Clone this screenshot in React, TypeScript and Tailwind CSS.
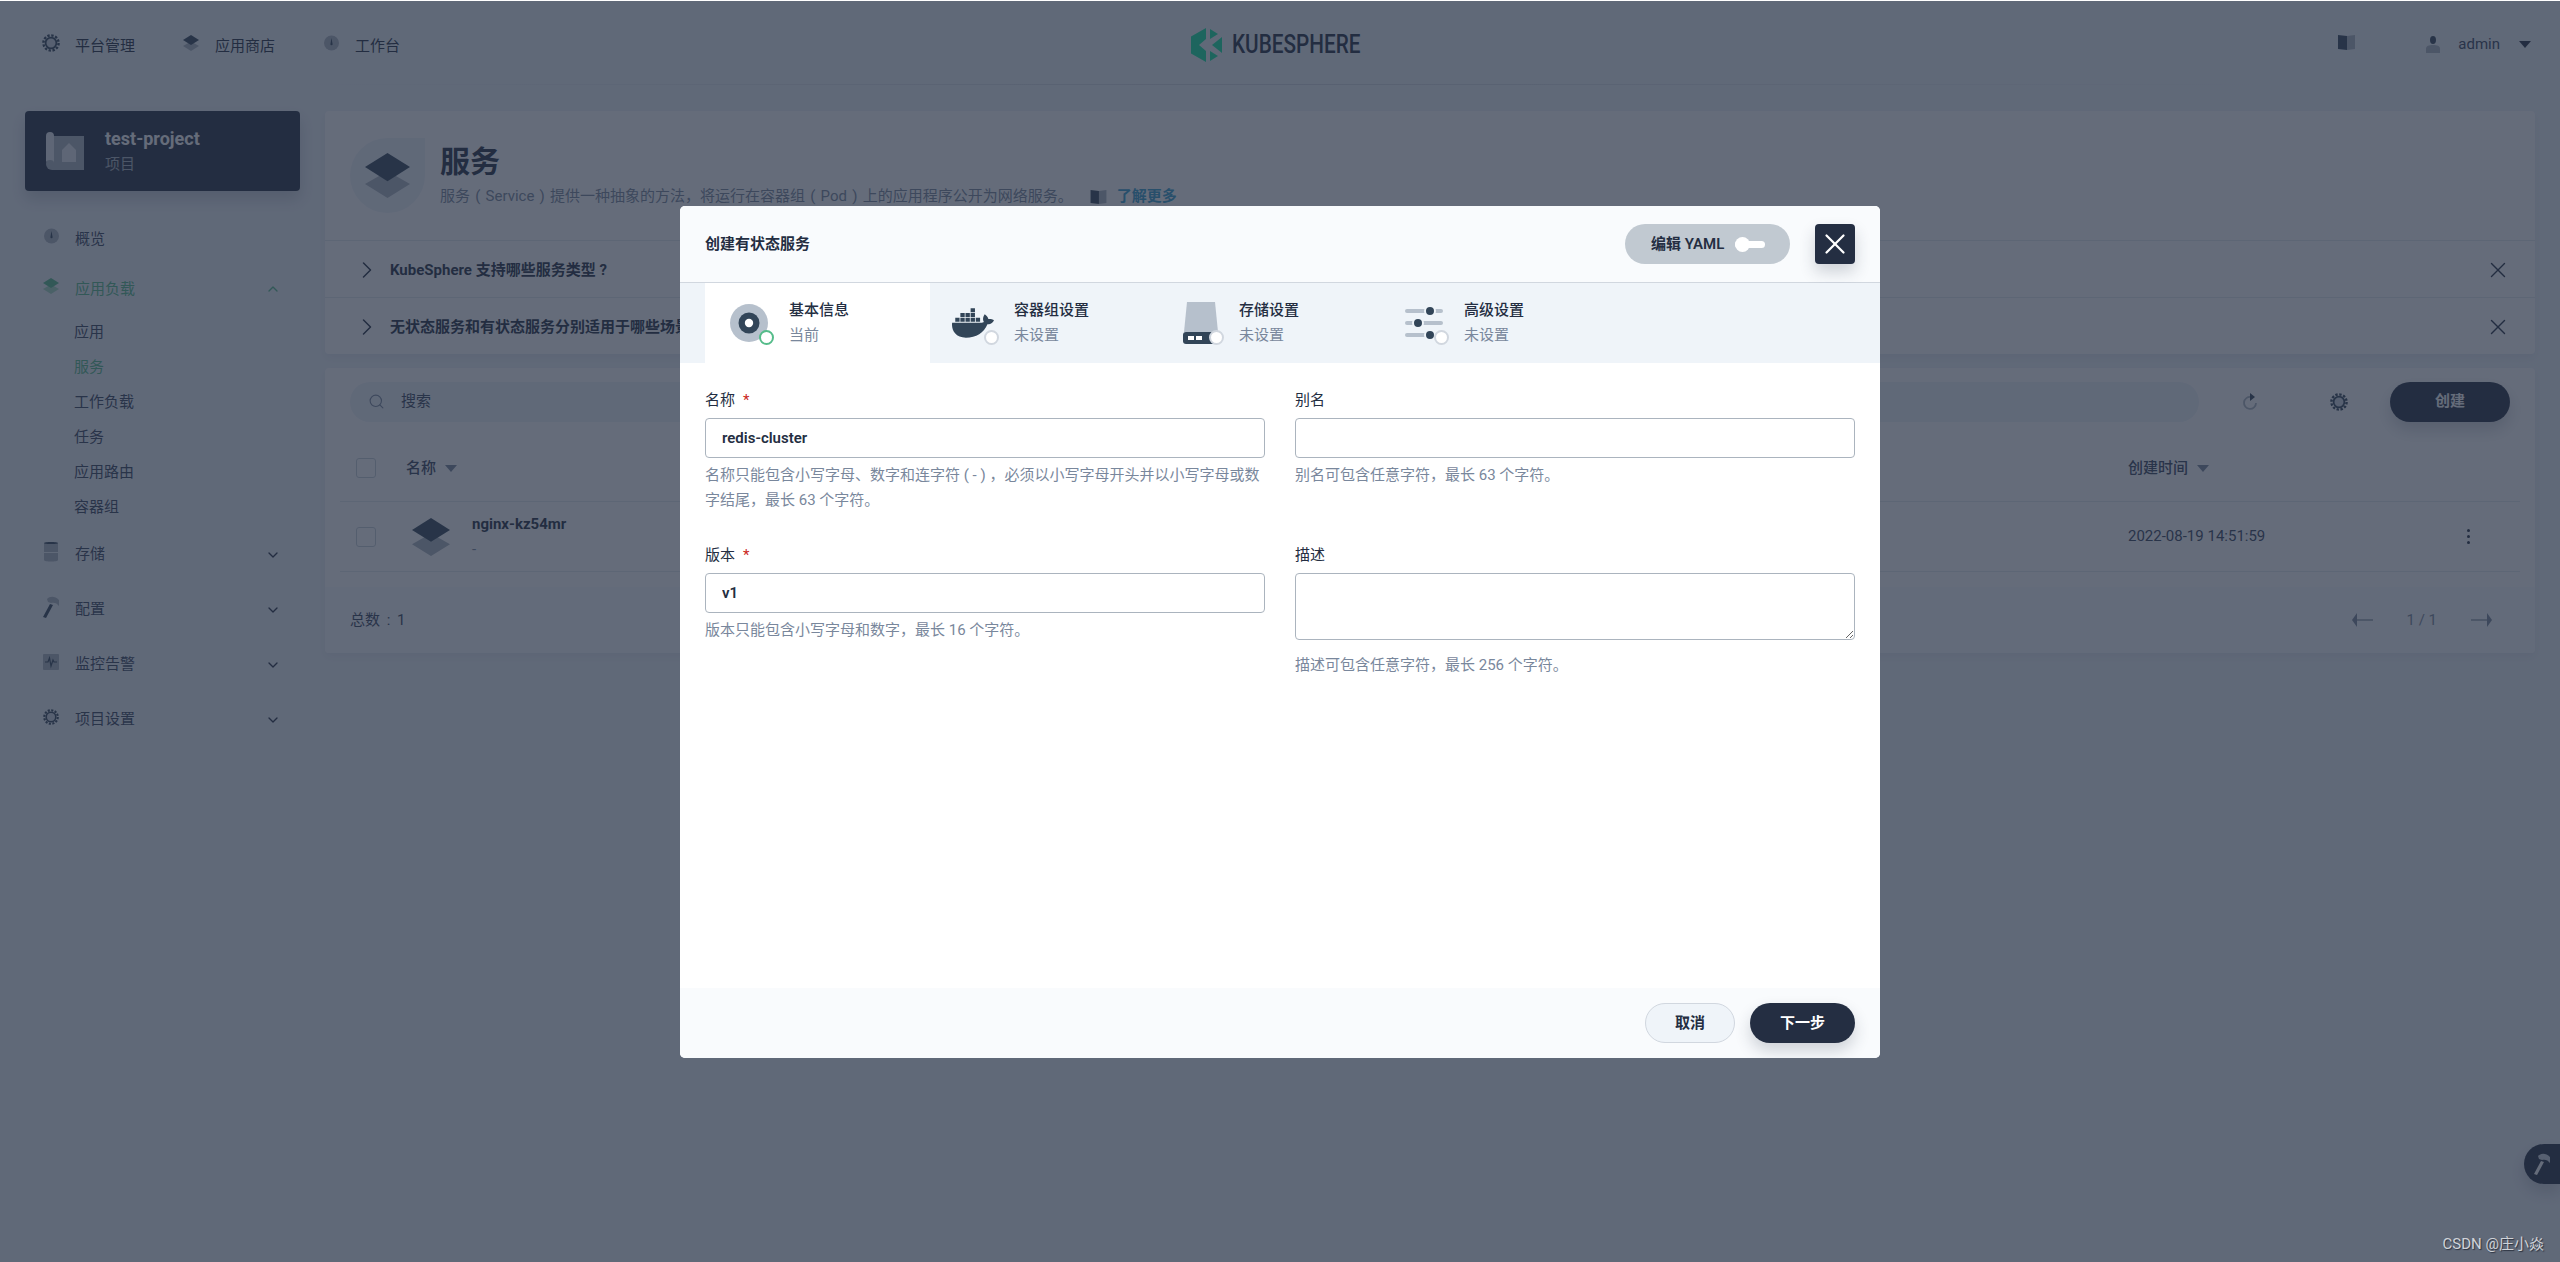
import { ChevronDown, ChevronRight, ChevronUp, Search, X } from "lucide-react";
import { FaDocker } from "react-icons/fa";

const DARK = "#324558";
const LIGHT = "#abb4be";

const GearIcon = ({ size = 18 }: { size?: number }) => (
  <svg width={size} height={size} viewBox="0 0 18 18">
    <circle cx="9" cy="9" r="7.6" fill="none" stroke={DARK} strokeWidth="2.4" strokeDasharray="2.4 1.58" />
    <circle cx="9" cy="9" r="5.4" fill="#d1d7df" stroke={DARK} strokeWidth="1.8" />
  </svg>
);

const LayersIcon = ({ size = 16, top = DARK, bottom = LIGHT }: { size?: number; top?: string; bottom?: string }) => (
  <svg width={size} height={size} viewBox="0 0 16 16">
    <path d="M8 6.5 16 11 8 16 0 11Z" fill={bottom} />
    <path d="M8 0 16 5 8 10 0 5Z" fill={top} />
  </svg>
);

const DialIcon = () => (
  <svg width="15" height="16" viewBox="0 0 15 16">
    <circle cx="7.5" cy="8" r="7.5" fill={LIGHT} />
    <path d="M7.5 3 8.6 9.2a1.1 1.1 0 1 1-2.2 0Z" fill={DARK} />
  </svg>
);

const BookIcon = ({ w = 17, h = 15 }: { w?: number; h?: number }) => (
  <svg width={w} height={h} viewBox="0 0 17 15">
    <path d="M0 0 9 1V15L0 14Z" fill={DARK} />
    <path d="M9 1 17 0V14L9 15Z" fill={LIGHT} />
  </svg>
);

const UserIcon = () => (
  <svg width="14" height="17" viewBox="0 0 14 17">
    <ellipse cx="7" cy="4" rx="3" ry="4" fill={DARK} />
    <path d="M0 12.5C0 10 3 9 7 9s7 1 7 3.5V17H0Z" fill={LIGHT} />
  </svg>
);

const Caret = ({ className = "" }: { className?: string }) => (
  <svg width="12" height="7" viewBox="0 0 12 7" className={className}>
    <path d="M0 0H12L6 7Z" fill="currentColor" />
  </svg>
);

const ProjectIcon = () => (
  <svg width="38" height="38" viewBox="0 0 38 38">
    <path d="M4 4H38V38H6a6 6 0 0 1-6-6Z" fill="#abb4be" />
    <path d="M0 4a4 4 0 0 1 8 0V31a4 3 0 0 0-4-3 4 3 0 0 0-4 3Z" fill="#e6ebf0" />
    <path d="M16 18 23 11 30 18V30H16Z" fill="#e6ebf0" />
  </svg>
);

const StorageIcon = () => (
  <svg width="16" height="21" viewBox="0 0 16 21">
    <path d="M1 2C1 .5 15 .5 15 2V11H1Z" fill={LIGHT} />
    <path d="M1 2C1 .5 15 .5 15 2c0 1.4-14 1.4-14 0Z" fill={DARK} />
    <path d="M1 12H15V19C15 21 1 21 1 19Z" fill={LIGHT} />
  </svg>
);

const HammerIcon = ({ color = DARK, head = LIGHT }: { color?: string; head?: string }) => (
  <svg width="16" height="22" viewBox="0 0 16 22">
    <path d="M7 8 10 9 3 22 0 21Z" fill={color} />
    <path d="M4 3C7 0 12 0 16 4V10C14 7 11 6 8 7L5 6Z" fill={head} />
  </svg>
);

const MonitorIcon = () => (
  <svg width="16" height="16" viewBox="0 0 16 16">
    <rect width="16" height="16" rx="1" fill={LIGHT} />
    <path d="M2 8H5L6.5 4 8 12 10 6 11 8H14" fill="none" stroke={DARK} strokeWidth="1.2" />
  </svg>
);

const StatusDot = ({ active = false }: { active?: boolean }) => (
  <span
    className={`absolute left-[29px] top-[29px] h-[15px] w-[15px] rounded-full border-[2.5px] bg-white ${
      active ? "border-[#55bc8a]" : "border-[#d1d7df]"
    }`}
  />
);

const DiscIcon = () => (
  <svg width="38" height="38" viewBox="0 0 38 38">
    <circle cx="19" cy="19" r="19" fill="#b6c0cc" />
    <circle cx="19" cy="19" r="10.5" fill={DARK} />
    <circle cx="19" cy="19" r="4.2" fill="#ffffff" />
  </svg>
);

const DriveIcon = () => (
  <svg width="36" height="42" viewBox="0 0 36 42" className="ml-[3px]">
    <path d="M4 0H32L35 30H1Z" fill="#b6c0cc" />
    <path d="M3 30H33a3 3 0 0 1 3 3V42H3a3 3 0 0 1-3-3V33a3 3 0 0 1 3-3Z" fill={DARK} />
    <rect x="5" y="34" width="6" height="4" fill="#ffffff" />
    <rect x="13" y="34" width="6" height="4" fill="#ffffff" />
  </svg>
);

const SlidersIcon = () => (
  <svg width="38" height="34" viewBox="0 0 38 34">
    <g fill="#b6c0cc">
      <rect y="3" width="38" height="4" rx="2" />
      <rect y="15" width="38" height="4" rx="2" />
      <rect y="27" width="38" height="4" rx="2" />
    </g>
    <g fill={DARK} stroke="#eff4f9" strokeWidth="2">
      <circle cx="25" cy="5" r="5" />
      <circle cx="13" cy="17" r="5" />
      <circle cx="25" cy="29" r="5" />
    </g>
  </svg>
);

const LogoMark = () => (
  <svg width="31" height="34" viewBox="0 0 31 34">
    <path d="M15 0V11L8 17 15 23V34L0 25.5V8.5Z" fill="#10e8a0" />
    <path d="M19 1 27 6 19 11Z" fill="#10e8a0" />
    <path d="M31 9V25L21 17Z" fill="#10e8a0" />
    <path d="M19 23 27 28 19 33Z" fill="#10e8a0" />
  </svg>
);

const NavTop = ({ icon, label }: { icon: React.ReactNode; label: string }) => (
  <div className="flex items-center gap-[15px]">
    <span className="mb-[8px] flex w-[18px] justify-center">{icon}</span>
    <span>{label}</span>
  </div>
);

const SideItem = ({
  icon,
  label,
  tall = true,
  open = false,
  active = false,
  arrow = true,
}: {
  icon: React.ReactNode;
  label: string;
  tall?: boolean;
  open?: boolean;
  active?: boolean;
  arrow?: boolean;
}) => (
  <div className={`flex items-center pl-[18px] pr-[19px] ${tall ? "h-[55px]" : "h-[50px]"} ${active ? "text-[#55bc8a]" : "text-[#36435c]"}`}>
    <span className="mb-[6px] mr-[16px] flex w-[16px] justify-center">{icon}</span>
    <span className="flex-1">{label}</span>
    {arrow &&
      (open ? (
        <ChevronUp size={16} strokeWidth={2} className="text-[#55bc8a]" />
      ) : (
        <ChevronDown size={16} strokeWidth={2} className="text-[#242e42]" />
      ))}
  </div>
);

const SubItem = ({ label, active = false }: { label: string; active?: boolean }) => (
  <div className={`flex h-[35px] items-center pl-[49px] ${active ? "text-[#55bc8a]" : "text-[#36435c]"}`}>{label}</div>
);

const Tip = ({ text, height }: { text: string; height: string }) => (
  <div className={`flex items-center border-b border-[#e3e9ef] pl-[28px] pr-[24px] pt-[2px] last:border-b-0 ${height}`}>
    <ChevronRight size={28} strokeWidth={1.3} className="mr-[9px] text-[#242e42]" />
    <span className="flex-1 font-bold text-[#242e42]">{text}</span>
    <X size={26} strokeWidth={1.3} className="text-[#242e42]" />
  </div>
);

const Checkbox = () => <span className="h-[20px] w-[20px] rounded-[3px] border border-[#c7cfd8] bg-white" />;

const Step = ({
  icon,
  title,
  sub,
  active = false,
}: {
  icon: React.ReactNode;
  title: string;
  sub: string;
  active?: boolean;
}) => (
  <div className={`flex h-full w-[225px] items-center pl-[25px] ${active ? "bg-white" : ""}`}>
    <div className="relative mr-[15px] flex h-[44px] w-[44px] items-center">
      {icon}
      <StatusDot active={active} />
    </div>
    <div>
      <div className="font-medium text-[#242e42]">{title}</div>
      <div className="text-[#79879c]">{sub}</div>
    </div>
  </div>
);

const Label = ({ text, required = false }: { text: string; required?: boolean }) => (
  <div className="mb-[5px] h-[25px] text-[#242e42]">
    {text}
    {required && <span className="ml-[8px] text-[#ca2621]">*</span>}
  </div>
);

const Field = ({
  label,
  value = "",
  hint,
  required = false,
}: {
  label: string;
  value?: string;
  hint: string;
  required?: boolean;
}) => (
  <div>
    <Label text={label} required={required} />
    <input
      readOnly
      value={value}
      className="h-[40px] w-full rounded-[4px] border border-[#abb4be] bg-white px-[16px] font-semibold text-[#242e42] outline-none"
    />
    <p className="mt-[5px] leading-[25px] text-[#79879c]">{hint}</p>
  </div>
);

export default function App() {
  return (
    <div className="relative h-screen w-full overflow-hidden border-t border-[#ffffff] bg-[#eff4f9] font-[Roboto,'Noto_Sans_CJK_SC',sans-serif] text-[15px] leading-[25px] text-[#242e42]">
      <header className="flex h-[83px] items-center pl-[42px] pr-[29px] pt-[8px]">
        <div className="flex flex-1 items-center gap-[47px]">
          <NavTop icon={<GearIcon />} label="平台管理" />
          <NavTop icon={<LayersIcon />} label="应用商店" />
          <NavTop icon={<DialIcon />} label="工作台" />
        </div>
        <div className="mb-[4px] mr-[22px] flex items-center gap-[10px]">
          <LogoMark />
          <span className="w-[128px] origin-left scale-x-[.83] whitespace-nowrap text-[25px] font-medium leading-none text-[#242e42]">
            KUBESPHERE
          </span>
        </div>
        <div className="flex flex-1 items-center justify-end">
          <span className="mb-[8px] mr-[71px]">
            <BookIcon />
          </span>
          <span className="mb-[4px] mr-[18px]">
            <UserIcon />
          </span>
          <span className="mb-[4px] mr-[19px] text-[#36435c]">admin</span>
          <Caret className="mb-[4px] text-[#242e42]" />
        </div>
      </header>
      <div className="mx-[270px] h-px bg-linear-to-r from-transparent via-[#d1d7df] to-transparent" />

      <div className="flex gap-[25px] px-[25px] pt-[26px]">
        <aside className="w-[275px] shrink-0">
          <div className="mb-[23px] flex h-[80px] items-center gap-[21px] rounded-[4px] bg-[#242e42] pl-[21px] shadow-[0_8px_16px_0_rgba(36,46,66,0.2)]">
            <ProjectIcon />
            <div>
              <div className="text-[18px] font-bold leading-[27px] text-white">test-project</div>
              <div className="text-[#abb4be]">项目</div>
            </div>
          </div>
          <SideItem icon={<DialIcon />} label="概览" tall={false} arrow={false} />
          <SideItem icon={<LayersIcon top="#55bc8a" bottom="#a5d9bf" />} label="应用负载" tall={false} open active />
          <div className="mb-[2px] mt-[1px]">
            <SubItem label="应用" />
            <SubItem label="服务" active />
            <SubItem label="工作负载" />
            <SubItem label="任务" />
            <SubItem label="应用路由" />
            <SubItem label="容器组" />
          </div>
          <SideItem icon={<StorageIcon />} label="存储" />
          <SideItem icon={<HammerIcon />} label="配置" />
          <SideItem icon={<MonitorIcon />} label="监控告警" />
          <SideItem icon={<GearIcon />} label="项目设置" />
        </aside>

        <main className="flex-1">
          <section className="rounded-[4px] bg-white shadow-[0_4px_8px_0_rgba(36,46,66,0.06)]">
            <div className="flex h-[130px] items-start gap-[15px] border-b border-[#e3e9ef] pl-[25px] pt-[27px]">
              <div className="flex h-[75px] w-[75px] items-center justify-center rounded-full rounded-tr-none bg-[#eff4f9]">
                <LayersIcon size={45} />
              </div>
              <div className="mt-[2px]">
                <h1 className="text-[30px] font-bold leading-[44px] text-[#242e42]">服务</h1>
                <div className="flex items-center text-[#79879c]">
                  <span className="[word-spacing:1.5px]">服务 ( Service ) 提供一种抽象的方法，将运行在容器组 ( Pod ) 上的应用程序公开为网络服务。</span>
                  <span className="ml-[15px] mr-[8px]">
                    <BookIcon w={21} h={14} />
                  </span>
                  <span className="font-semibold text-[#329dce]">了解更多</span>
                </div>
              </div>
            </div>
            <Tip text="KubeSphere 支持哪些服务类型 ?" height="h-[57px]" />
            <Tip text="无状态服务和有状态服务分别适用于哪些场景？" height="h-[56px]" />
          </section>

          <section className="mt-[14px] rounded-[4px] bg-white shadow-[0_4px_8px_0_rgba(36,46,66,0.06)]">
            <div className="flex h-[67px] items-center pl-[25px] pr-[25px]">
              <div className="flex h-[40px] w-[1849px] items-center rounded-full bg-[#eff4f9] pl-[18px] text-[#36435c]">
                <Search size={17} strokeWidth={1.6} className="mr-[16px] text-[#79879c]" />
                搜索
              </div>
              <span className="ml-[42px] text-[#79879c]">
                <svg width="18" height="18" viewBox="0 0 18 18">
                  <path d="M15 10a6 6 0 1 1-5-6" fill="none" stroke={LIGHT} strokeWidth="1.8" />
                  <path d="M9 0 14 4 9 8Z" fill={DARK} />
                </svg>
              </span>
              <span className="ml-[71px]">
                <GearIcon />
              </span>
              <button className="ml-[42px] h-[40px] w-[120px] rounded-full bg-[#242e42] font-semibold text-white shadow-[0_8px_16px_0_rgba(36,46,66,0.2)]">
                创建
              </button>
            </div>

            <div className="mx-[15px] flex h-[67px] items-center border-b border-[#e3e9ef] pl-[16px] pr-[50px] font-medium text-[#36435c]">
              <Checkbox />
              <span className="ml-[30px] flex flex-1 items-center gap-[9px]">
                名称 <Caret className="text-[#79879c]" />
              </span>
              <span className="flex w-[342px] items-center gap-[9px]">
                创建时间 <Caret className="text-[#79879c]" />
              </span>
            </div>
            <div className="mx-[15px] mb-[15px] flex h-[70px] items-center border-b border-[#e3e9ef] pl-[16px] pr-[50px]">
              <Checkbox />
              <span className="ml-[36px] mr-[22px]">
                <LayersIcon size={38} />
              </span>
              <div className="flex-1">
                <div className="font-bold text-[#242e42]">nginx-kz54mr</div>
                <div className="text-[#79879c]">-</div>
              </div>
              <span className="w-[339px] text-[#36435c]">2022-08-19 14:51:59</span>
              <span className="flex w-[3px] flex-col gap-[3px]">
                <i className="h-[3px] w-[3px] rounded-full bg-[#242e42]" />
                <i className="h-[3px] w-[3px] rounded-full bg-[#242e42]" />
                <i className="h-[3px] w-[3px] rounded-full bg-[#242e42]" />
              </span>
            </div>
            <div className="flex h-[66px] items-center rounded-b-[4px] bg-[#f9fbfd] pl-[25px] pr-[43px]">
              <span className="flex-1 text-[#36435c] [word-spacing:3px]">总数 : 1</span>
              <svg width="21" height="14" viewBox="0 0 21 14">
                <path d="M0 7 5 0V14Z" fill="#79879c" />
                <rect x="5" y="6" width="16" height="2" fill="#abb4be" />
              </svg>
              <span className="mx-[34px] text-[#79879c]">1 / 1</span>
              <svg width="21" height="14" viewBox="0 0 21 14">
                <rect y="6" width="16" height="2" fill="#abb4be" />
                <path d="M21 7 16 0V14Z" fill="#79879c" />
              </svg>
            </div>
          </section>
        </main>
      </div>

      <button className="absolute bottom-[78px] right-0 flex h-[40px] w-[36px] items-center justify-center rounded-l-full bg-[#242e42] shadow-[0_8px_16px_0_rgba(36,46,66,0.2)]">
        <HammerIcon color="#ffffff" head="#d1d7df" />
      </button>

      <div className="absolute inset-0 flex justify-center bg-[rgba(35,45,65,0.7)] pt-[205px]">
        <div className="flex h-[852px] w-[1200px] flex-col overflow-hidden rounded-[5px] bg-white">
          <div className="flex h-[77px] items-center border-b border-[#d1d7df] bg-[#f9fbfd] pl-[25px] pr-[25px]">
            <span className="flex-1 font-bold text-[#242e42]">创建有状态服务</span>
            <div className="flex h-[40px] w-[165px] items-center rounded-full bg-[#c1c9d1] pl-[26px] font-semibold text-[#242e42]">
              <span className="whitespace-nowrap">编辑 YAML</span>
              <span className="relative ml-[11px] flex h-[16px] w-[30px] items-center">
                <span className="h-[7px] w-full rounded-full bg-white" />
                <span className="absolute left-0 h-[15px] w-[15px] rounded-full bg-white" />
              </span>
            </div>
            <button className="ml-[25px] flex h-[40px] w-[40px] items-center justify-center rounded-[4px] bg-[#242e42] shadow-[0_8px_16px_0_rgba(36,46,66,0.2)]">
              <X size={34} strokeWidth={1.6} className="text-white" />
            </button>
          </div>

          <div className="flex h-[80px] shrink-0 bg-[#eff4f9] pl-[25px]">
            <Step active icon={<DiscIcon />} title="基本信息" sub="当前" />
            <Step icon={<FaDocker size={42} color={DARK} className="-ml-[3px]" />} title="容器组设置" sub="未设置" />
            <Step icon={<DriveIcon />} title="存储设置" sub="未设置" />
            <Step icon={<SlidersIcon />} title="高级设置" sub="未设置" />
          </div>

          <div className="flex-1 px-[25px] pt-[25px]">
            <div className="grid grid-cols-2 gap-x-[30px]">
              <div className="h-[155px]">
                <Field
                  required
                  label="名称"
                  value="redis-cluster"
                  hint="名称只能包含小写字母、数字和连字符 ( - ) ，必须以小写字母开头并以小写字母或数字结尾，最长 63 个字符。"
                />
              </div>
              <div className="h-[155px]">
                <Field label="别名" hint="别名可包含任意字符，最长 63 个字符。" />
              </div>
              <Field required label="版本" value="v1" hint="版本只能包含小写字母和数字，最长 16 个字符。" />
              <div>
                <Label text="描述" />
                <textarea
                  readOnly
                  className="block h-[67px] w-full rounded-[4px] border border-[#abb4be] bg-white outline-none"
                />
                <p className="mt-[13px] text-[#79879c]">描述可包含任意字符，最长 256 个字符。</p>
              </div>
            </div>
          </div>

          <div className="flex h-[70px] items-center justify-end gap-[15px] bg-[#f9fbfd] pr-[25px] font-semibold">
            <button className="h-[40px] w-[90px] rounded-full border border-[#d1d7df] bg-[#eff4f9] text-[#242e42]">取消</button>
            <button className="h-[40px] w-[105px] rounded-full bg-[#242e42] text-white shadow-[0_8px_16px_0_rgba(36,46,66,0.2)]">下一步</button>
          </div>
        </div>
      </div>

      <span className="absolute bottom-[5px] right-[16px] text-[15px] text-[#d0d3d8] [text-shadow:1px_1px_1px_#2b3240]">
        CSDN @庄小焱
      </span>
    </div>
  );
}
